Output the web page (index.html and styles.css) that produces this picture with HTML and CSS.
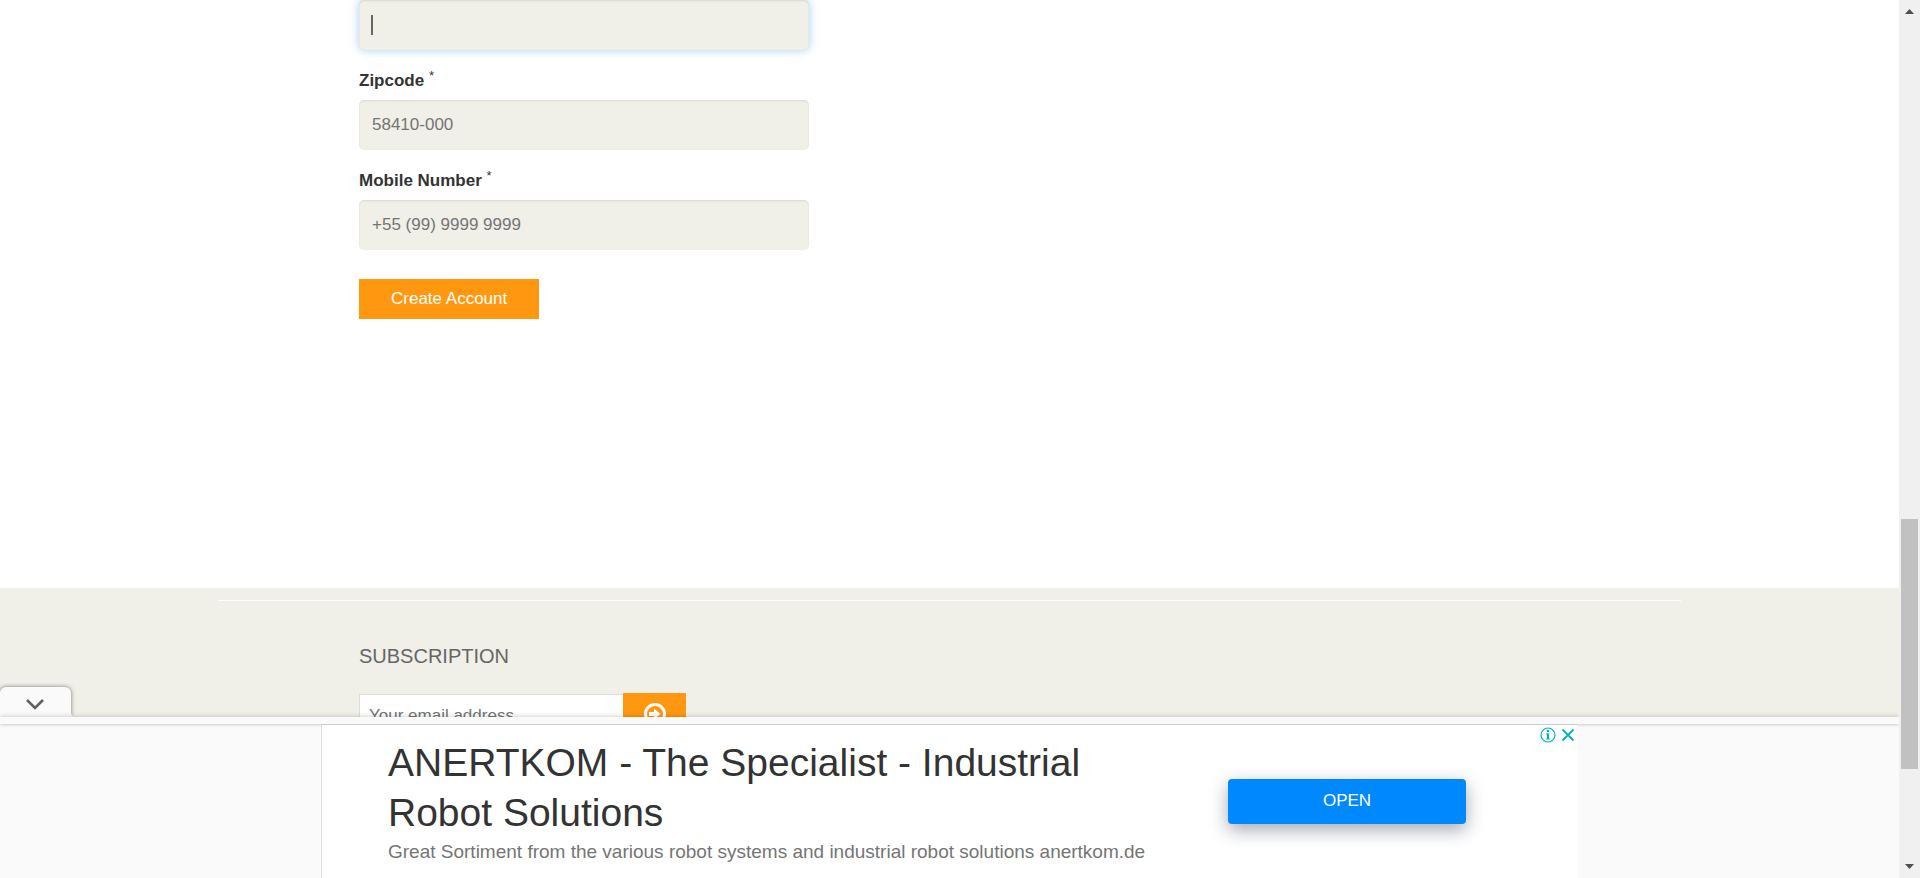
FILE: index.html
```html
<!DOCTYPE html>
<html lang="en">
<head>
<meta charset="utf-8">
<meta name="viewport" content="width=device-width, initial-scale=1">
<title>Create Account</title>
<link rel="stylesheet" href="styles.css">
</head>
<body>
<div class="page">
  <main class="content">
    <form class="account-form">
      <div class="field field-active">
        <input class="field-input" type="text" aria-label="City">
        <span class="caret"></span>
      </div>
      <div class="field">
        <label class="field-label" for="zipcode">Zipcode <span class="required">*</span></label>
        <input class="field-input" id="zipcode" type="text" placeholder="58410-000">
      </div>
      <div class="field">
        <label class="field-label" for="mobile">Mobile Number <span class="required">*</span></label>
        <input class="field-input" id="mobile" type="tel" placeholder="+55 (99) 9999 9999">
      </div>
      <button class="create-button" type="button">Create Account</button>
    </form>
  </main>
  <footer class="footer">
    <hr class="footer-rule">
    <section class="subscription">
      <h2 class="subscription-title">SUBSCRIPTION</h2>
      <form class="subscription-form">
        <input class="email-input" type="email" placeholder="Your email address" aria-label="Your email address">
        <button class="email-button" type="button" aria-label="Subscribe">
          <svg width="24" height="24" viewBox="0 0 24 24" fill="none"><circle cx="12" cy="12" r="9.500" stroke="#fff" stroke-width="3"/><path d="M6 10h5V6.500l6.500 5.500-6.500 5.500V14H6z" fill="#fff"/></svg>
        </button>
      </form>
    </section>
  </footer>

  <aside class="anchor-ad">
    <button class="collapse-tab" type="button" aria-label="Collapse">
      <svg width="20" height="14" viewBox="0 0 20 14" fill="none"><path d="M2 2l8 8 8-8" stroke="#616161" stroke-width="2.6"/></svg>
      <svg class="tab-flare" width="5" height="5" viewBox="0 0 5 5"><path d="M0 0Q0 5 5 5H0z" fill="#fafafa"/></svg>
    </button>
    <div class="ad-strip"></div>
    <div class="ad-body">
      <div class="ad-card">
        <div class="ad-copy">
          <h3 class="ad-title">ANERTKOM - The Specialist - Industrial<br>Robot Solutions</h3>
          <p class="ad-text">Great Sortiment from the various robot systems and industrial robot solutions anertkom.de</p>
        </div>
        <button class="open-button" type="button">OPEN</button>
        <div class="ad-controls">
          <a class="ad-control" href="#" aria-label="Ad information"><svg width="16" height="16" viewBox="0 0 16 16" fill="none"><circle cx="8" cy="8" r="7" stroke="#00aecd" stroke-width="1.2"/><path d="M8 3v2M8 6.400V12" stroke="#00aecd" stroke-width="2.200"/><path d="M6.200 6.900H8M6.200 12h3.600" stroke="#00aecd" stroke-width="1"/></svg></a>
          <a class="ad-control" href="#" aria-label="Close ad"><svg width="16" height="16" viewBox="0 0 16 16" fill="none"><path d="M2.500 2.500l11 11M13.500 2.500l-11 11" stroke="#00aecd" stroke-width="1.800"/></svg></a>
        </div>
      </div>
    </div>
  </aside>
</div>
<div class="scrollbar">
  <svg class="scroll-arrow" width="9" height="5" viewBox="0 0 9 5"><path d="M0 5L4.500 0 9 5z" fill="#505050"/></svg>
  <div class="scroll-track"><div class="scroll-thumb"></div></div>
  <svg class="scroll-arrow" width="9" height="5" viewBox="0 0 9 5"><path d="M0 0h9L4.500 5z" fill="#505050"/></svg>
</div>
</body>
</html>
```

FILE: styles.css
```css
* {
  box-sizing: border-box;
}

body {
  margin: 0;
  display: flex;
  height: 100vh;
  overflow: hidden;
  background: #fff;
  color: #333;
  font: 17px/25px "Liberation Sans", Arial, sans-serif;
}

input,
button {
  font: inherit;
  margin: 0;
}

.page {
  position: relative;
  flex: 1;
  min-width: 0;
  display: flex;
  flex-direction: column;
  overflow: hidden;
}

.content,
.subscription {
  width: 100%;
  max-width: 1181px;
  margin: 0 auto;
}

.content {
  padding-bottom: 269px;
}

.account-form {
  max-width: 450px;
}

.field {
  margin-bottom: 18px;
}

.field-active {
  position: relative;
}

.field-label {
  display: block;
  margin-bottom: 7px;
  font-weight: bold;
}

.required {
  font-size: 13px;
  font-weight: normal;
  line-height: 1;
  vertical-align: 6px;
}

.field-input {
  display: block;
  width: 100%;
  height: 50px;
  padding: 0 13px;
  border: 0;
  border-radius: 5px;
  background: #f0efe8;
  box-shadow: inset 0 1px 2px rgba(0, 0, 0, 0.1);
  color: #666;
}

.field-active .field-input {
  box-shadow: inset 0 1px 2px rgba(0, 0, 0, 0.1), 0 0 10px rgba(102, 175, 233, 0.6);
}

.caret {
  position: absolute;
  left: 12px;
  top: 15px;
  width: 2px;
  height: 20px;
  background: #666;
}

.field-input::placeholder,
.email-input::placeholder {
  color: #757575;
  opacity: 1;
}

.create-button {
  display: block;
  height: 40px;
  margin-top: 29px;
  padding: 0 32px 2px;
  border: 0;
  background: #ff9810;
  color: #fff;
}

.footer {
  flex: 1 0 auto;
  padding-top: 12px;
  background: #f0efe8;
}

.footer-rule {
  width: 77%;
  height: 1px;
  margin: 0 auto 43px;
  border: 0;
  background: #fff;
}

.subscription-title {
  margin: 0 0 24px;
  color: #666;
  font-size: 20px;
  font-weight: normal;
  line-height: 25px;
}

.subscription-form {
  display: flex;
  align-items: flex-start;
  padding-bottom: 140px;
}

.email-input {
  width: 264px;
  height: 44px;
  margin-top: 1px;
  padding: 0 9px;
  border: 1px solid #ddd;
  border-right: 0;
  border-radius: 0;
  background: #fff;
}

.email-button {
  display: flex;
  justify-content: center;
  width: 63px;
  height: 45px;
  padding: 9px 0;
  border: 0;
  background: #ff9810;
}

.anchor-ad {
  position: absolute;
  left: 0;
  right: 0;
  bottom: 0;
}

.collapse-tab {
  position: relative;
  display: flex;
  align-items: center;
  justify-content: center;
  width: 71px;
  height: 30px;
  padding: 6px 1px 0 0;
  border: 0;
  border-radius: 6px 6px 0 0;
  background: #fafafa;
  box-shadow: 0 0 4px rgba(0, 0, 0, 0.5);
}

.tab-flare {
  position: absolute;
  left: 100%;
  bottom: 0;
}

.ad-strip {
  position: relative;
  height: 7px;
  background: #fafafa;
  box-shadow: 0 -1px 5px rgba(0, 0, 0, 0.15), 0 1px 3px rgba(0, 0, 0, 0.12);
}

.ad-body {
  background: #fafafa;
}

.ad-card {
  position: relative;
  display: flex;
  align-items: flex-start;
  justify-content: space-between;
  max-width: 1257px;
  margin: 0 auto;
  padding: 13px 112px 13px 66px;
  border-top: 1px solid #ccc;
  border-left: 1px solid #ddd;
  background: #fff;
}

.ad-title {
  margin: 0;
  font-size: 39px;
  font-weight: normal;
  line-height: 50px;
}

.ad-text {
  margin: 0;
  color: #757575;
  font-size: 19px;
  line-height: 27px;
}

.open-button {
  width: 238px;
  height: 45px;
  margin-top: 41px;
  padding: 0 0 2px;
  border: 0;
  border-radius: 4px;
  background: #08f;
  box-shadow: 0 6px 18px rgba(30, 40, 70, 0.4);
  color: #fff;
}

.ad-controls {
  position: absolute;
  top: 2px;
  right: 2px;
  display: flex;
  gap: 4px;
}

.ad-control {
  display: flex;
}

.scrollbar {
  display: flex;
  flex-direction: column;
  align-items: center;
  gap: 4px;
  width: 21px;
  padding: 9px 0;
  background: #f0f0f0;
}

.scroll-arrow {
  flex: none;
}

.scroll-track {
  flex: 1;
  display: grid;
  grid-template-rows: 501fr 250fr 91fr;
  width: 17px;
}

.scroll-thumb {
  grid-row: 2;
  background: #c1c1c1;
}
```
